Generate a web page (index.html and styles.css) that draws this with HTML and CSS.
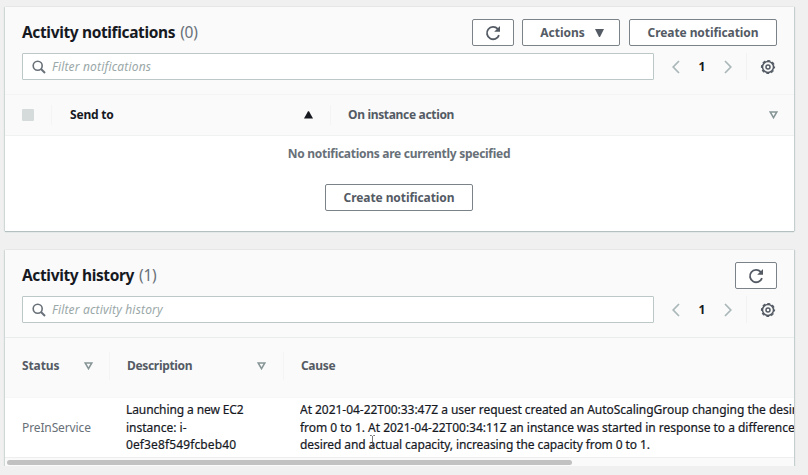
FILE: index.html
```html
<!DOCTYPE html>
<html lang="en">
<head>
<meta charset="utf-8">
<title>Activity</title>
<link rel="stylesheet" href="styles.css">
</head>
<body>
<svg class="defs" aria-hidden="true">
  <symbol id="refresh" viewBox="0 0 16 16"><path d="M14 10.1A6.2 6.2 0 1 1 12.7 3.8L14.2 5.2" fill="none" stroke="currentColor" stroke-width="1.8"/><path d="M15 1v5.8H9.2z" fill="currentColor"/></symbol>
  <symbol id="search" viewBox="0 0 14 14"><circle cx="5.7" cy="5.7" r="4.5" fill="none" stroke="currentColor" stroke-width="1.6"/><path d="M9 9l4 4" stroke="currentColor" stroke-width="1.9"/></symbol>
  <symbol id="prev" viewBox="0 0 8 14"><path d="M7 1L1.200 7 7 13" fill="none" stroke="currentColor" stroke-width="1.7"/></symbol>
  <symbol id="next" viewBox="0 0 8 14"><path d="M1 1l5.800 6L1 13" fill="none" stroke="currentColor" stroke-width="1.7"/></symbol>
  <symbol id="gear" viewBox="0 0 16 16"><circle cx="8" cy="8" r="5.500" fill="none" stroke="currentColor" stroke-width="1.500"/><circle cx="8" cy="8" r="6.500" fill="none" stroke="currentColor" stroke-width="1.200" stroke-dasharray="3 2.105" stroke-dashoffset="1.5"/><circle cx="8" cy="8" r="2" fill="none" stroke="currentColor" stroke-width="1.500"/></symbol>
  <symbol id="sort" viewBox="0 0 9 8"><path d="M1.200 1h6.600L4.500 6.700z" fill="none" stroke="currentColor" stroke-width="1.500"/></symbol>
</svg>
<main class="page">
  <section class="card card-notifications">
    <header class="card-head">
      <h2 class="title"><span class="title-text">Activity notifications</span><span class="count">(0)</span></h2>
      <div class="actions">
        <button class="btn btn-icon btn-first"><svg class="i-refresh"><use href="#refresh"/></svg></button>
        <button class="btn btn-menu">Actions<svg class="i-caret" viewBox="0 0 9 8"><path d="M0 0h9L5 8H4z" fill="currentColor"/></svg></button>
        <button class="btn btn-create">Create notification</button>
      </div>
    </header>
    <div class="tools">
      <div class="search"><svg class="i-search"><use href="#search"/></svg><span class="hint">Filter notifications</span></div>
      <nav class="pager"><svg class="i-arrow"><use href="#prev"/></svg><span class="num">1</span><svg class="i-arrow"><use href="#next"/></svg></nav>
      <div class="settings"><svg class="i-gear"><use href="#gear"/></svg></div>
    </div>
    <div class="thead thead-notifications">
      <div class="th th-check"><span class="checkbox"></span></div>
      <div class="th th-active"><span>Send to</span><svg class="i-sort sorted" viewBox="0 0 9 8"><path d="M4 .3h1L9 7.500H0z" fill="currentColor"/></svg></div>
      <div class="th"><span>On instance action</span><svg class="i-sort"><use href="#sort"/></svg></div>
    </div>
    <div class="empty">
      <p class="empty-text">No notifications are currently specified</p>
      <button class="btn btn-create">Create notification</button>
    </div>
  </section>

  <section class="card card-history">
    <header class="card-head">
      <h2 class="title"><span class="title-text">Activity history</span><span class="count">(1)</span></h2>
      <div class="actions"><button class="btn btn-icon"><svg class="i-refresh"><use href="#refresh"/></svg></button></div>
    </header>
    <div class="tools">
      <div class="search"><svg class="i-search"><use href="#search"/></svg><span class="hint">Filter activity history</span></div>
      <nav class="pager"><svg class="i-arrow"><use href="#prev"/></svg><span class="num">1</span><svg class="i-arrow"><use href="#next"/></svg></nav>
      <div class="settings"><svg class="i-gear"><use href="#gear"/></svg></div>
    </div>
    <div class="thead thead-history">
      <div class="th"><span>Status</span><svg class="i-sort"><use href="#sort"/></svg></div>
      <div class="th"><span>Description</span><svg class="i-sort"><use href="#sort"/></svg></div>
      <div class="th"><span>Cause</span></div>
    </div>
    <div class="row">
      <div class="status">PreInService</div>
      <div class="desc"><span class="desc-top">Launching a new EC2</span><br>instance: i-<br><span class="desc-id">0ef3e8f549fcbeb40</span></div>
      <div class="cause"><span class="line-1">At 2021-04-22T00:33:47Z a user request created an AutoScalingGroup changing the desired</span><br><span class="line-2">from 0 to 1. At 2021-04-22T00:34:11Z an instance was started in response to a difference</span><br><span class="line-3">desired and actual capacity, increasing the capacity from 0 to 1.</span></div>
      <svg class="cursor" viewBox="0 0 7 13"><path d="M1 .5h1.500l1 1 1-1H6M3.500 1.500v10M1 12.500h1.500l1-1 1 1H6" fill="none" stroke="#555" stroke-width=".8"/></svg>
    </div>
    <div class="scrollbar"><div class="thumb"></div></div>
  </section>
</main>
</body>
</html>
```
FILE: styles.css
```css
* { box-sizing: border-box; }
body { margin: 0; background: #f0f0f0; color: #16191f; font: 12px/17.5px "Noto Sans", sans-serif; overflow: hidden; }
.defs { position: absolute; width: 0; height: 0; }
svg { display: block; flex: none; }
.page { width: 789px; margin: 7px 0 0 5px; display: flex; flex-direction: column; gap: 19px; }
.card { background: #fff; box-shadow: 0 1px 1px #b4c0c0, 1px 0 1px #c8d0d0, -1px 0 1px #d5dbdb; overflow: hidden; }
.card-notifications { height: 224px; }
.card-history { height: 216px; }
.card-head { height: 46px; padding: 12px 17px 0; display: flex; justify-content: space-between; background: #fafafa; }
.title { margin: 1px 0 0; height: 26px; display: flex; align-items: center; gap: 5px; font-size: 15.5px; font-weight: 700; white-space: nowrap; }
.title-text { letter-spacing: -0.36px; }
.count { font-weight: 400; color: #687078; letter-spacing: -0.3px; }
.actions { display: flex; gap: 9px; }
.btn { height: 27px; padding: 0; display: flex; align-items: center; justify-content: center; border: 1px solid #7b8389; border-radius: 2px; background: #fff; color: #545b64; font: 700 12px/18px "Noto Sans", sans-serif; white-space: nowrap; }
.btn-icon { width: 42px; }
.btn-first { margin-right: -1px; }
.btn-menu { width: 98px; gap: 10px; padding-left: 2px; }
.btn-create { width: 148px; letter-spacing: -0.08px; }
.i-refresh { width: 16px; height: 16px; }
.i-caret { width: 9px; height: 8px; }
.tools { height: 41px; padding: 0 17px 14px; display: flex; background: #fafafa; }
.search { width: 632px; height: 27px; padding-left: 9px; display: flex; align-items: center; gap: 6px; border: 1px solid #bcc8c8; border-radius: 1px; background: #fff; }
.i-search { width: 14px; height: 14px; color: #687078; }
.hint { font-style: italic; color: #9aa8a8; letter-spacing: 0.17px; }
.pager { width: 92px; height: 27px; padding: 0 14px 0 18px; display: flex; align-items: center; justify-content: space-between; color: #aab7b8; }
.i-arrow { width: 8px; height: 14px; }
.num { color: #16191f; font-weight: 700; }
.settings { width: 31px; height: 27px; display: flex; align-items: center; justify-content: flex-end; border-left: 1px solid #f1f3f3; color: #545b64; }
.i-gear { width: 16px; height: 16px; margin-right: 1px; }
.thead { display: grid; background: #fafafa; border-top: 1px solid #f3f4f4; border-bottom: 1px solid #f0f2f2; font-weight: 700; color: #545b64; letter-spacing: -0.33px; }
.thead-notifications { height: 42px; padding: 10px 0; grid-template-columns: 46px 279px 1fr; }
.thead-history { height: 61px; padding: 14px 0 17px; grid-template-columns: 104px 174px 1fr; border-top-color: #eaeded; border-bottom-color: #f6f7f7; }
.th { padding: 0 17px; display: flex; align-items: center; justify-content: space-between; border-left: 1px solid #f3f4f4; white-space: nowrap; }
.th:first-child { border-left: 0; }
.thead-history .th:first-child { padding-right: 16px; letter-spacing: -0.1px; }
.th-active { color: #16191f; padding-left: 18px; letter-spacing: -0.2px; }
.checkbox { width: 12px; height: 12px; border-radius: 1px; background: #d5dbdb; }
.thead-notifications .th:last-child { padding-right: 16px; }
.i-sort { width: 9px; height: 8px; color: #879596; }
.sorted { color: #16191f; }
.empty { padding: 9px 1px 0 0; display: flex; flex-direction: column; align-items: center; gap: 21px; }
.empty-text { margin: 0; height: 18px; font-weight: 700; color: #687078; letter-spacing: -0.28px; }
.row { position: relative; height: 59px; padding-top: 3px; display: grid; grid-template-columns: 121px 174px 1fr; white-space: nowrap; -webkit-text-stroke: 0.2px currentColor; }
.status { padding: 17.5px 0 0 17px; color: #687078; letter-spacing: -0.12px; -webkit-text-stroke: 0; }
.desc-top { letter-spacing: -0.1px; }
.desc-id { letter-spacing: 0.12px; }
.cause { width: 494px; overflow: hidden; }
.line-1 { letter-spacing: -0.035px; }
.line-2 { letter-spacing: -0.02px; }
.line-3 { letter-spacing: -0.09px; }
.cursor { position: absolute; left: 364px; top: 37px; width: 7px; height: 13px; }
.scrollbar { height: 9px; padding: 2px; border-top: 1px solid #eee; background: #fafafa; }
.thumb { width: 565px; height: 5px; border-radius: 3px; background: #c1c1c1; }
```
